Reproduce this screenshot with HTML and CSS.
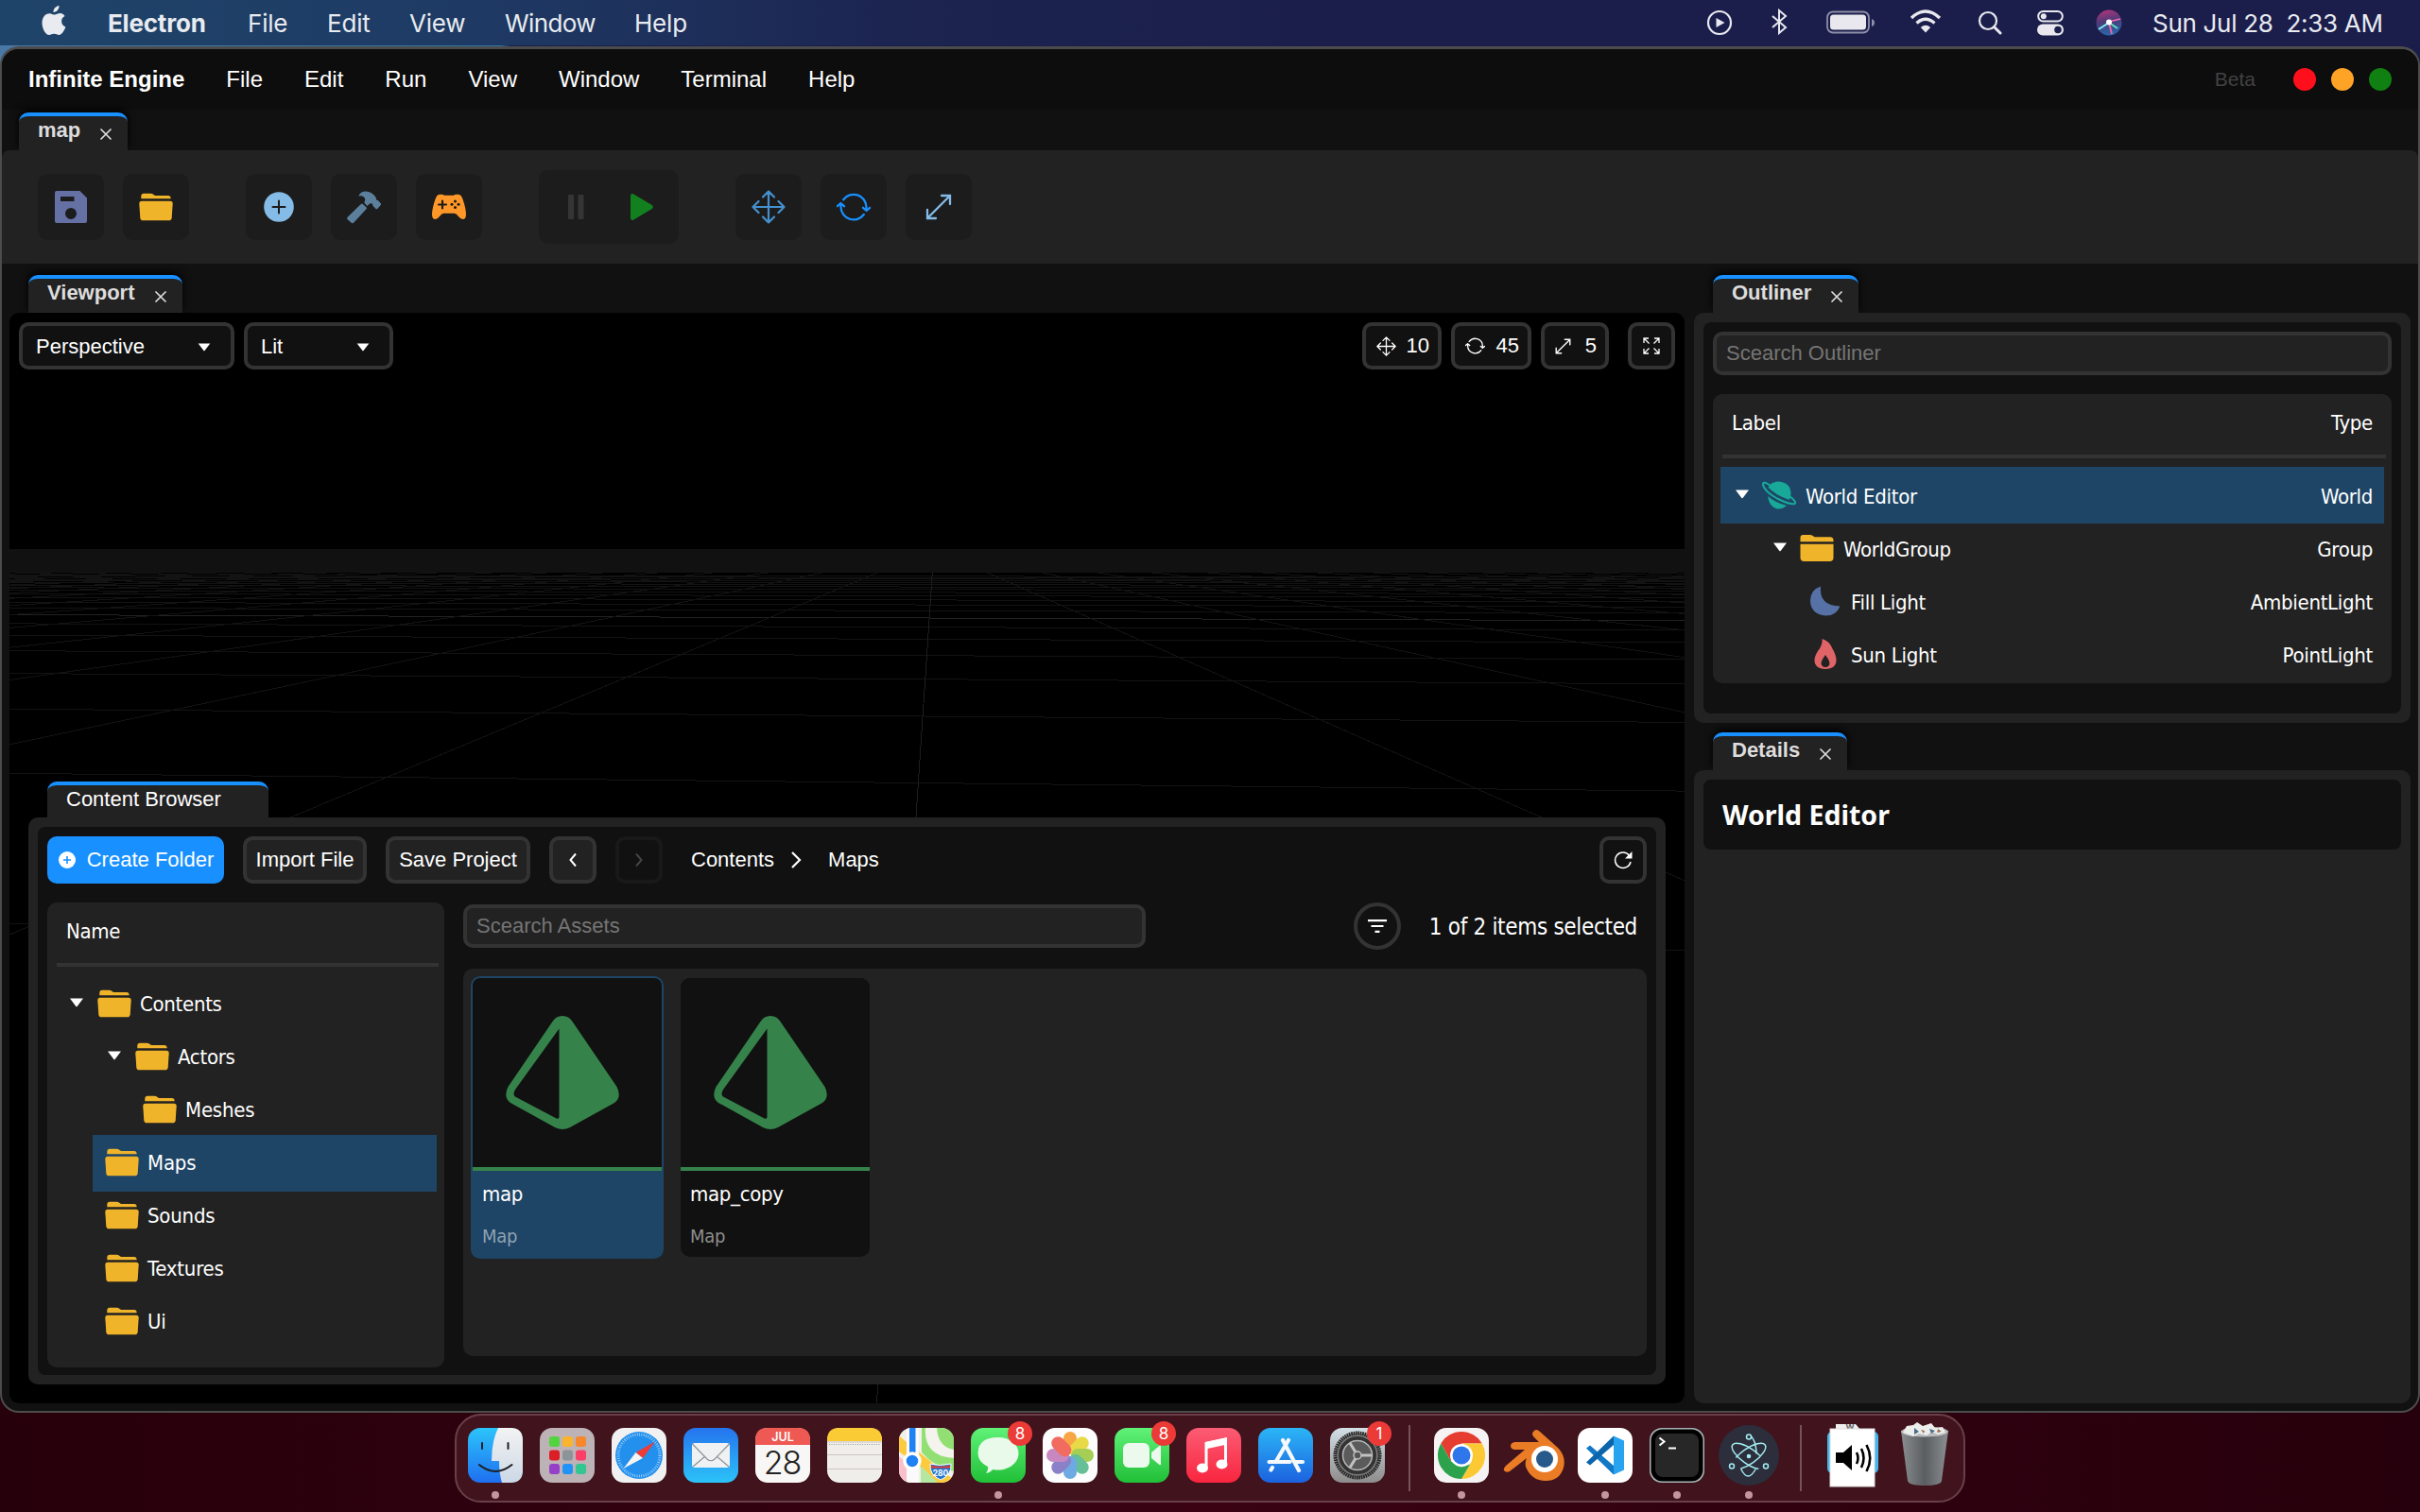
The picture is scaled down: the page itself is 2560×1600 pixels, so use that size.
FILE: index.html
```html
<!DOCTYPE html>
<html lang="en">
<head>
<meta charset="utf-8">
<title>Infinite Engine</title>
<link rel="stylesheet" href="styles.css">
</head>
<body>
<svg class="sprite" aria-hidden="true">
  <symbol id="i-close" viewBox="0 0 12 12"><path d="M1 1l10 10M11 1L1 11" fill="none" stroke="currentColor" stroke-width="1.700" stroke-linecap="round"/></symbol>
  <symbol id="i-caret" viewBox="0 0 16 10"><path d="M1 0.500h14L8.600 9a.8.8 0 0 1-1.200 0z" fill="currentColor"/></symbol>
  <symbol id="i-open" viewBox="0 0 36 30"><path d="M2.300 6.200V3.400Q2.500.8 5 .8h7.400q1.400 0 2.500.8l1.300.8q1 .6 2.300.6H31q2.500 0 2.700 3.200z" fill="#f0b42b"/><path d="M3 8.800h30q2.800 0 2.700 2.600l-1 15q-.3 2.800-2.800 2.800H4.100q-2.500 0-2.800-2.800l-1-15Q.2 8.800 3 8.800z" fill="#f0b42b"/></symbol>
  <symbol id="i-folder" viewBox="0 0 36 30"><path d="M.5 8.200V4Q.5 1 3.500 1h7.500q1.300 0 2.300.7l1.500 1q.9.600 2 .600H32q3.500 0 3.500 3.500v1.400z" fill="#f0b42b"/><path d="M.5 10.800h35V25q0 4-4 4h-27q-4 0-4-4z" fill="#f0b42b"/></symbol>
  <symbol id="i-move" viewBox="0 0 36 36"><path d="M18 1.500v33M1.500 18h33M12 7.500l6-6 6 6M12 28.500l6 6 6-6M7.500 12l-6 6 6 6M28.500 12l6 6-6 6" fill="none" stroke="currentColor" stroke-width="2.200" stroke-linecap="round" stroke-linejoin="round"/></symbol>
  <symbol id="i-rotate" viewBox="0 0 36 30"><path d="M7.200 7.200A13.500 13.500 0 0 1 31.500 15v3M28.800 23A13.500 13.500 0 0 1 4.500 15v-3M28 15.800l3.600 3.200 3.600-3.200M.8 14.200L4.400 11 8 14.200" fill="none" stroke="currentColor" stroke-width="2.300" stroke-linecap="round" stroke-linejoin="round"/></symbol>
  <symbol id="i-scale" viewBox="0 0 28 28"><path d="M2 26L26 2M17 2h9v9M2 17v9h9" fill="none" stroke="currentColor" stroke-width="2.300" stroke-linecap="round"/></symbol>
  <symbol id="i-prism" viewBox="0 0 120 120"><path fill-rule="evenodd" d="M49.500 6Q53 0 60 0t10.500 6L117.500 75q5.500 11-2.500 17L68 118q-8 4-16 0L5 92q-8-6-2.500-17zM56.500 13.500L10 78q-3 5 0 7.500l43.500 23q3 1 3-1.500z" fill="#35834a"/></symbol>
</svg>

<header class="menubar">
  <svg class="apple" viewBox="0 0 28 34"><path fill="#e8ebf0" d="M19.500 1c.3 3.500-2.600 7-6 6.900C13.200 4.500 16.300 1.300 19.500 1zM25.600 12c-2.300 1.400-3.500 3-3.500 5.500 0 2.900 1.700 4.900 4.300 6-1.300 3.700-3.900 8.300-6.900 8.500-2 .1-2.700-1.200-5.200-1.200S11 31.900 9.100 32C5.300 32.100 1.500 25.200 1.500 19.200 1.500 13.300 5 9.200 9.300 9.200c2.200 0 3.700 1.400 5.500 1.400 1.700 0 3.300-1.500 6-1.500 1.700 0 3.600 1 4.800 2.900z"/></svg>
  <span class="m-app">Electron</span><span class="m-file">File</span><span class="m-edit">Edit</span><span class="m-view">View</span><span class="m-window">Window</span><span class="m-help">Help</span>
  <div class="status">
    <svg width="28" height="28" viewBox="0 0 28 28"><circle cx="14" cy="14" r="12" fill="none" stroke="#e8e8ee" stroke-width="2.200"/><path d="M10.500 9v10l9-5z" fill="#e8e8ee"/></svg>
    <svg class="bt" width="20" height="28" viewBox="0 0 20 28"><path d="M2 8l14 12-7 6V2l7 6L2 20" fill="none" stroke="#e8e8ee" stroke-width="2"/></svg>
    <svg class="batt" width="52" height="26" viewBox="0 0 52 26"><rect x="1" y="1.500" width="44" height="22" rx="6" fill="none" stroke="#8d8ea8" stroke-width="1.800"/><rect x="4" y="4.500" width="38" height="16" rx="3.500" fill="#e8e8ee"/><path d="M48 9q3 1 3 4t-3 4z" fill="#8d8ea8"/></svg>
    <svg class="wifi" width="34" height="26" viewBox="0 0 34 26"><path d="M2 9Q17-5 32 9M7.500 14.500q9.500-8.500 19 0" fill="none" stroke="#e8e8ee" stroke-width="3.400"/><path d="M11.800 19q5.200-4.500 10.400 0L17 24.500z" fill="#e8e8ee"/></svg>
    <svg class="srch" width="26" height="26" viewBox="0 0 26 26"><circle cx="11" cy="11" r="9" fill="none" stroke="#e8e8ee" stroke-width="2.200"/><path d="M17.500 17.500l6.500 6.500" stroke="#e8e8ee" stroke-width="3" stroke-linecap="round"/></svg>
    <svg class="cc" width="28" height="28" viewBox="0 0 28 28"><rect x="1.200" y="2" width="25.600" height="10.500" rx="5.200" fill="none" stroke="#e8e8ee" stroke-width="2"/><circle cx="6.800" cy="7.200" r="3" fill="#e8e8ee"/><rect y="15.500" width="28" height="12" rx="6" fill="#e8e8ee"/><circle cx="22" cy="21.500" r="3.800" fill="#1c1f4c"/></svg>
    <svg class="siri" width="28" height="28" viewBox="0 0 28 28"><defs><linearGradient id="siri" x1=".3" y1="0" x2=".5" y2="1"><stop offset="0" stop-color="#b0347c"/><stop offset=".45" stop-color="#4d3a77"/><stop offset="1" stop-color="#2869ad"/></linearGradient></defs><circle cx="14" cy="14" r="13.500" fill="url(#siri)"/><path d="M14 14L3 21" stroke="#7ff0ef" stroke-width="2"/><path d="M14 13l12-3" stroke="#f46db0" stroke-width="1.500"/><path d="M14 14l9 6" stroke="#5fe3c0" stroke-width="2"/><path d="M14 14l3 12" stroke="#e865a7" stroke-width="2"/><circle cx="14" cy="13.500" r="3" fill="#fff"/></svg>
    <span class="clock">Sun Jul 28&nbsp; 2:33 AM</span>
  </div>
</header>

<main class="window">
  <nav class="appbar">
    <b>Infinite Engine</b><span>File</span><span>Edit</span><span>Run</span><span>View</span><span>Window</span><span>Terminal</span><span>Help</span>
    <div class="lights"><em>Beta</em><i class="red"></i><i class="amber"></i><i class="green"></i></div>
  </nav>

  <div class="tabs tabs-doc"><div class="tab">map<svg><use href="#i-close"/></svg></div></div>

  <div class="toolbar">
    <div class="set">
      <div class="tool"><svg width="34" height="34" viewBox="0 0 34 34"><path fill-rule="evenodd" fill="#6570a4" d="M2 0h24.500L34 7.500V32q0 2-2 2H2q-2 0-2-2V2Q0 0 2 0zM6 6v5h14.500V6zM17 18a6 6 0 1 0 0 12 6 6 0 0 0 0-12z"/></svg></div>
      <div class="tool"><svg width="36" height="30"><use href="#i-open"/></svg></div>
    </div>
    <div class="set">
      <div class="tool"><svg width="32" height="32" viewBox="0 0 32 32"><circle cx="16" cy="16" r="15.800" fill="#85bce7"/><path d="M16 9.500v13M9.500 16h13" stroke="#1c1c1c" stroke-width="2" stroke-linecap="round"/></svg></div>
      <div class="tool"><svg width="36" height="35" viewBox="0 0 36 35"><path fill="#5c809c" d="M.7 27.700L14.800 14q1-.9 2 0l3.600 3.300q1 1 0 2L7.300 33.600q-1.300 1.300-2.600.1L.7 30.300q-1.200-1.300 0-2.600zM12.500 5.500Q14 .5 20 .5q6 .2 10 5.500 1.300 1.800 1 3.500l1.800.4 3 3.300q.7.900-.1 1.700l-3.500 4q-.8.800-1.700 0l-3.300-3.500-.2-2q-2.600-.8-4 1.200l-1.500 1.300-3.300-3.300q2.400-4.400-.7-6.400-2-1.600-5-.7z"/></svg></div>
      <div class="tool"><svg width="36" height="28" viewBox="0 0 36 28"><path fill="#ff9828" d="M8 .8Q12 .3 13 1.700h10Q24 .3 28 .8q3 .2 4.500 5Q36 16 36 22q0 5-3.500 5-2.300 0-4.500-3-2.500-3.300-4.500-3.300h-11Q10.500 20.700 8 24q-2.200 3-4.500 3Q0 27 0 22 0 16 3.500 5.800 5 1 8 .8z"/><path d="M11 7.500v8M7 11.500h8" stroke="#1c1c1c" stroke-width="2.200" stroke-linecap="round"/><g fill="#1c1c1c"><circle cx="24.500" cy="8" r="1.500"/><circle cx="24.500" cy="14.500" r="1.500"/><circle cx="21" cy="11.300" r="1.500"/><circle cx="28" cy="11.300" r="1.500"/></g></svg></div>
    </div>
    <div class="playset">
      <svg width="18" height="26" viewBox="0 0 18 26"><rect x="0" width="6" height="26" rx="1" fill="#353535"/><rect x="10.500" width="6" height="26" rx="1" fill="#353535"/></svg>
      <svg width="24" height="28" viewBox="0 0 24 28"><path d="M0 2Q.3-.5 3 .3L23 12.300q1.600 1.700 0 3.400L3 27.700Q.3 28.500 0 26z" fill="#138020"/></svg>
    </div>
    <div class="set">
      <div class="tool c-move"><svg width="36" height="36"><use href="#i-move"/></svg></div>
      <div class="tool c-rot"><svg width="36" height="30"><use href="#i-rotate"/></svg></div>
      <div class="tool c-scale"><svg width="28" height="28"><use href="#i-scale"/></svg></div>
    </div>
  </div>

  <div class="workspace">
    <section class="left">
      <div class="tabs tabs-view"><div class="tab">Viewport<svg><use href="#i-close"/></svg></div></div>
      <div class="viewport">
        <svg class="grid" id="grid" viewBox="10 331 1772 1154" shape-rendering="crispEdges"></svg>
        <div class="vbar">
          <div class="box sel-p">Perspective<svg width="16" height="9"><use href="#i-caret"/></svg></div>
          <div class="box sel-l">Lit<svg width="16" height="9"><use href="#i-caret"/></svg></div>
          <div class="box snap s1"><svg width="21" height="21"><use href="#i-move"/></svg>10</div>
          <div class="box snap s2"><svg width="21" height="18"><use href="#i-rotate"/></svg>45</div>
          <div class="box snap s3"><svg width="17" height="17"><use href="#i-scale"/></svg>5</div>
          <div class="box full"><svg width="18" height="18" viewBox="0 0 18 18"><path d="M1 6V1h5M1 1l5.500 5.500M12 1h5v5M17 1l-5.500 5.500M1 12v5h5M1 17l5.500-5.500M12 17h5v-5M17 17l-5.500-5.500" fill="none" stroke="#fff" stroke-width="1.300"/></svg></div>
        </div>

        <div class="drawer">
          <div class="dtab">Content Browser</div>
          <div class="frame browser">
            <div class="pane bpane">
              <div class="actions">
                <div class="btn primary"><svg width="20" height="20" viewBox="0 0 20 20"><circle cx="10" cy="10" r="9" fill="#fff"/><path d="M10 6v8M6 10h8" stroke="#1890ff" stroke-width="1.600"/></svg>Create Folder</div>
                <div class="btn imp">Import File</div>
                <div class="btn sav">Save Project</div>
                <div class="btn sq"><svg width="10" height="16" viewBox="0 0 10 16"><path d="M8 1.500L2.500 8 8 14.500" fill="none" stroke="#fff" stroke-width="2"/></svg></div>
                <div class="btn sq off"><svg width="10" height="16" viewBox="0 0 10 16"><path d="M2 1.500L7.500 8 2 14.500" fill="none" stroke="#444" stroke-width="2"/></svg></div>
                <div class="crumbs"><span>Contents</span><svg width="12" height="20" viewBox="0 0 12 20"><path d="M2 2l8 8-8 8" fill="none" stroke="#fff" stroke-width="2.200"/></svg><span>Maps</span></div>
                <div class="btn sq ref"><svg width="20" height="20" viewBox="0 0 20 20"><path d="M16.500 5.200A8.300 8.300 0 1 0 18 12" fill="none" stroke="#fff" stroke-width="1.500"/><path d="M19.500 1v7.500H12z" fill="#fff"/></svg></div>
              </div>
              <div class="cols">
                <div class="card tree">
                  <div class="thead"><span>Name</span></div>
                  <div class="row d0"><svg class="caret"><use href="#i-caret"/></svg><svg class="fo"><use href="#i-open"/></svg>Contents</div>
                  <div class="row d1"><svg class="caret"><use href="#i-caret"/></svg><svg class="fo"><use href="#i-open"/></svg>Actors</div>
                  <div class="row d2"><svg class="fo"><use href="#i-open"/></svg>Meshes</div>
                  <div class="row d3 on"><svg class="fo"><use href="#i-open"/></svg>Maps</div>
                  <div class="row d3"><svg class="fo"><use href="#i-open"/></svg>Sounds</div>
                  <div class="row d3"><svg class="fo"><use href="#i-open"/></svg>Textures</div>
                  <div class="row d3"><svg class="fo"><use href="#i-open"/></svg>Ui</div>
                </div>
                <div class="assets">
                  <div class="abar">
                    <div class="input">Scearch Assets</div>
                    <div class="filter"><svg width="22" height="14" viewBox="0 0 22 14"><path d="M1 1.200h20M4.500 7h13M8.500 12.800h5" stroke="#fff" stroke-width="2.200"/></svg></div>
                    <div class="count">1 of 2 items selected</div>
                  </div>
                  <div class="card files">
                    <div class="file on"><div class="thumb"><svg><use href="#i-prism"/></svg></div><p>map</p><small>Map</small></div>
                    <div class="file"><div class="thumb"><svg><use href="#i-prism"/></svg></div><p>map_copy</p><small>Map</small></div>
                  </div>
                </div>
              </div>
            </div>
          </div>
        </div>
      </div>
    </section>

    <aside class="right">
      <div class="tabs tabs-side"><div class="tab">Outliner<svg><use href="#i-close"/></svg></div></div>
      <div class="frame outliner">
        <div class="pane">
          <div class="input">Scearch Outliner</div>
          <div class="card list">
            <div class="thead"><span>Label</span><span>Type</span></div>
            <div class="row on o0"><svg class="caret"><use href="#i-caret"/></svg><svg width="36" height="32" viewBox="0 0 36 32"><path d="M5.500 12Q6 1 17.500.5 30 1.500 30.500 13q.2 4-1.700 7Q13 14.500 6.500 6.500q-1 2.500-1 5.500z" fill="#18a999"/><path d="M9 5Q1.500-.5 1 3q0 7 15 15.500 14 7 18.500 5.500Q37 22 29 16" fill="none" stroke="#18a999" stroke-width="2"/><path d="M6 16q8 7 20 10-4.500 4-10 3.500Q7.500 27.500 6 16z" fill="#18a999"/></svg><span>World Editor</span><span class="ty">World</span></div>
            <div class="row o1"><svg class="caret"><use href="#i-caret"/></svg><svg class="fo"><use href="#i-folder"/></svg><span>WorldGroup</span><span class="ty">Group</span></div>
            <div class="row o2"><svg width="34" height="34" viewBox="0 0 34 34"><path d="M12 1.500Q10 22 32.500 22.500 28.500 32.500 17.500 32.500 1 31 1 16 1.500 5 12 1.500z" fill="#5571a6"/></svg><span>Fill Light</span><span class="ty">AmbientLight</span></div>
            <div class="row o2"><svg width="34" height="34" viewBox="0 0 34 34"><path fill-rule="evenodd" d="M13.500 1Q21 3 24.500 11.500q4 7 4 12 0 9-11.500 9.500-11.500-.5-11.500-9.500 0-4 3.500-9.500Q14.500 7 13.500 1zM17 18q-4.500 6-4.500 9 .5 4 4.500 4t4.500-4q0-3-4.500-9z" fill="#e06467"/></svg><span>Sun Light</span><span class="ty">PointLight</span></div>
          </div>
        </div>
      </div>
      <div class="tabs tabs-side t2"><div class="tab">Details<svg><use href="#i-close"/></svg></div></div>
      <div class="frame details"><div class="pane title">World Editor</div></div>
    </aside>
  </div>
</main>

<footer class="dock">
  <div class="app run"><svg viewBox="0 0 58 58"><defs><linearGradient id="g1" x1="0" y1="0" x2="0" y2="1"><stop offset="0" stop-color="#2cc4fb"/><stop offset="1" stop-color="#1f6ff0"/></linearGradient><linearGradient id="g2" x1="0" y1="0" x2="0" y2="1"><stop offset="0" stop-color="#f3f3f3"/><stop offset="1" stop-color="#ccd8e6"/></linearGradient></defs><rect width="58" height="58" rx="13" fill="url(#g1)"/><path d="M32 0h13q13 0 13 13v32q0 13-13 13h-9q-3-10-3-23h-8Q25 14 32 0z" fill="url(#g2)"/><path d="M15 16v6M42.500 16v6M12 39q17 14 34.500 0" fill="none" stroke="#1d2126" stroke-width="2" stroke-linecap="round"/></svg></div>
  <div class="app"><svg viewBox="0 0 58 58"><rect width="58" height="58" rx="13" fill="#bdb2b6"/><rect x="10" y="9" width="11" height="11" rx="3" fill="#52d43f"/><rect x="24" y="9" width="11" height="11" rx="3" fill="#fbb42b"/><rect x="38" y="9" width="11" height="11" rx="3" fill="#f7872b"/><rect x="10" y="23.500" width="11" height="11" rx="3" fill="#dc1e26"/><rect x="24" y="23.500" width="11" height="11" rx="3" fill="#8d9499"/><rect x="38" y="23.500" width="11" height="11" rx="3" fill="#fb3f66"/><rect x="10" y="38" width="11" height="11" rx="3" fill="#9540c9"/><rect x="24" y="38" width="11" height="11" rx="3" fill="#1f93f6"/><rect x="38" y="38" width="11" height="11" rx="3" fill="#33c690"/></svg></div>
  <div class="app"><svg viewBox="0 0 58 58"><rect width="58" height="58" rx="13" fill="#f1f1f1"/><circle cx="29" cy="29" r="25" fill="#2390ee"/><circle cx="29" cy="29" r="22" fill="none" stroke="#aed8fb" stroke-width="3" stroke-dasharray=".8 1.600"/><path d="M46 14.500L33 32l-7.500-6z" fill="#ef3b35"/><path d="M12.500 43L25.500 26l7.500 6z" fill="#f4f4f4"/></svg></div>
  <div class="app"><svg viewBox="0 0 58 58"><defs><linearGradient id="g3" x1="0" y1="0" x2="0" y2="1"><stop offset="0" stop-color="#2574ee"/><stop offset="1" stop-color="#2cc3f8"/></linearGradient></defs><rect width="58" height="58" rx="13" fill="url(#g3)"/><rect x="9" y="16" width="40" height="26" rx="3" fill="#f0f1f2"/><path d="M9.500 17l15.500 16q4 3.500 8 0L48.500 17M10 41l13-11M48 41L35 30" fill="none" stroke="#8c9499" stroke-width="1.200"/></svg></div>
  <div class="app"><svg viewBox="0 0 58 58"><rect width="58" height="58" rx="13" fill="#f8f7f6"/><path d="M0 18v-5Q0 0 13 0h32q13 0 13 13v5z" fill="#ee5a53"/><text x="29" y="14" class="jul">JUL</text><text x="28.500" y="48.500" class="day">28</text></svg></div>
  <div class="app"><svg viewBox="0 0 58 58"><rect width="58" height="58" rx="13" fill="#f0eeeb"/><path d="M0 14v-1Q0 0 13 0h32q13 0 13 13v1z" fill="#fbcb35"/><path d="M0 15h58M0 28.500h58M0 43.500h58" stroke="#c9c6c2"/><path d="M2 17.500h54" stroke="#9d9a98" stroke-dasharray="1 1.500"/></svg></div>
  <div class="app"><svg viewBox="0 0 58 58"><defs><clipPath id="c1"><rect width="58" height="58" rx="13"/></clipPath></defs><g clip-path="url(#c1)"><rect width="58" height="58" fill="#f2f0ea"/><path d="M24 0h34v46q-20-4-34-20z" fill="#92e073"/><path d="M28 0q-2 30 30 32V23Q41 20 40 0z" fill="#f4f3ee"/><path d="M0 8l9 8v16L0 25zM19 24l39 31v3H40L19 38z" fill="#fcca3f"/><path d="M0 30l14 12v16H0z" fill="#f9bfcb"/><path d="M8 0h13v58H8z" fill="#fafafa"/><path d="M11 0h6.500v32H11z" fill="#1e82f5"/><path d="M23 40l18 18H23z" fill="#b6e7a1"/></g><circle cx="14" cy="35" r="8" fill="#1e82f5" stroke="#fff" stroke-width="3.500"/><path d="M33 38q10 3 22 0 1 12-11 17-12-5-11-17z" fill="#2376cc" stroke="#fff"/><path d="M34 39.500q10 2.500 20 0v3H34z" fill="#d93b3b"/><text x="44" y="51" class="route">280</text></svg></div>
  <div class="app run"><svg viewBox="0 0 58 58"><defs><linearGradient id="g4" x1="0" y1="0" x2="0" y2="1"><stop offset="0" stop-color="#5ff277"/><stop offset="1" stop-color="#21bf38"/></linearGradient></defs><rect width="58" height="58" rx="13" fill="url(#g4)"/><path d="M29 10c12 0 21.500 7.500 21.500 17S41 44.500 29 44.500q-3 0-5.500-.6-3 3.200-7.500 4 2.500-3 2.200-6.600Q7.500 36 7.500 27 7.500 10 29 10z" fill="#e9f9ea"/></svg><b class="badge">8</b></div>
  <div class="app"><svg viewBox="0 0 58 58"><rect width="58" height="58" rx="13" fill="#fdfdfd"/><g opacity=".88"><rect x="22" y="4" width="14" height="24" rx="7" fill="#f89b2c"/><rect x="22" y="4" width="14" height="24" rx="7" fill="#e6d62f" transform="rotate(45 29 29)"/><rect x="22" y="4" width="14" height="24" rx="7" fill="#9bc83d" transform="rotate(90 29 29)"/><rect x="22" y="4" width="14" height="24" rx="7" fill="#52b788" transform="rotate(135 29 29)"/><rect x="22" y="4" width="14" height="24" rx="7" fill="#5a9fe0" transform="rotate(180 29 29)"/><rect x="22" y="4" width="14" height="24" rx="7" fill="#7c71c2" transform="rotate(225 29 29)"/><rect x="22" y="4" width="14" height="24" rx="7" fill="#c079b8" transform="rotate(270 29 29)"/><rect x="22" y="4" width="14" height="24" rx="7" fill="#f0584b" transform="rotate(315 29 29)"/></g></svg></div>
  <div class="app"><svg viewBox="0 0 58 58"><rect width="58" height="58" rx="13" fill="url(#g4)"/><rect x="9" y="16" width="28" height="26" rx="6" fill="#ecf9ed"/><path d="M39 26l8.500-7q1.500-1 1.500 1v18q0 2-1.500 1L39 32z" fill="#ecf9ed"/></svg><b class="badge">8</b></div>
  <div class="app"><svg viewBox="0 0 58 58"><defs><linearGradient id="g5" x1="0" y1="0" x2="0" y2="1"><stop offset="0" stop-color="#fb5c74"/><stop offset="1" stop-color="#f9253f"/></linearGradient></defs><rect width="58" height="58" rx="13" fill="url(#g5)"/><path d="M21 41V16.500L41.500 12v25" fill="none" stroke="#fff" stroke-width="3"/><path d="M20 15l23-5v7.500l-23 5z" fill="#fff"/><ellipse cx="17" cy="42.500" rx="6" ry="5" fill="#fff"/><ellipse cx="37.500" cy="38.500" rx="6" ry="5" fill="#fff"/></svg></div>
  <div class="app"><svg viewBox="0 0 58 58"><defs><linearGradient id="g6" x1="0" y1="0" x2="0" y2="1"><stop offset="0" stop-color="#2bb5f6"/><stop offset="1" stop-color="#1c62df"/></linearGradient></defs><rect width="58" height="58" rx="13" fill="url(#g6)"/><path d="M26 13l17 32M32 13L18.500 36M11.500 36h22M40 36h7M15 42l-1.500 2.500" fill="none" stroke="#f5f8fc" stroke-width="4.200" stroke-linecap="round"/></svg></div>
  <div class="app"><svg viewBox="0 0 58 58"><defs><linearGradient id="g7" x1="0" y1="0" x2="0" y2="1"><stop offset="0" stop-color="#d3dfe6"/><stop offset="1" stop-color="#8e8c8c"/></linearGradient></defs><rect width="58" height="58" rx="13" fill="url(#g7)"/><circle cx="29" cy="29" r="23.500" fill="#7d7d7d" stroke="#272727" stroke-width="4" stroke-dasharray="1.700 .7"/><circle cx="29" cy="29" r="18" fill="#6d6d6d" stroke="#333" stroke-width="4"/><circle cx="29" cy="29" r="15.500" fill="#5b5b5b" stroke="#b7b7b7" stroke-width="1.500"/><path d="M29 29h15M29 29l-8-13M29 29l-8 13" stroke="#c2c2c2" stroke-width="3"/><circle cx="29" cy="29" r="4" fill="#555" stroke="#c2c2c2" stroke-width="1.500"/></svg><b class="badge">1</b></div>
  <hr>
  <div class="app run"><svg viewBox="0 0 58 58"><rect width="58" height="58" rx="13" fill="#f5f3f3"/><path d="M29 4a25 25 0 0 1 21.700 12.500H29L18 35.500 7.300 16.500A25 25 0 0 1 29 4z" fill="#e53e31"/><path d="M50.700 16.500A25 25 0 0 1 29 54l11-19-1-12-10-6.500z" fill="#fcc934"/><path d="M29 54A25 25 0 0 1 7.300 16.500L18 35.500l11 6 9-3z" fill="#2da24c"/><circle cx="29" cy="29" r="12" fill="#fff"/><circle cx="29" cy="29" r="9.500" fill="#2f76ea"/></svg></div>
  <div class="app"><svg viewBox="0 0 58 58" overflow="visible"><path d="M29 4q3-4 7 0l19 17q9 9 6 21-4 14-19 14T21 41q-1-5 1-9L4 46q-4 2-6-1-1-2 2-5l20-17H9q-4-1-4-4t4-4h26L29 9q-2-3 0-5z" fill="#ea7c26"/><circle cx="41" cy="33" r="14" fill="#fff"/><circle cx="41" cy="33" r="9" fill="#275a8a"/></svg></div>
  <div class="app run"><svg viewBox="0 0 58 58"><rect width="58" height="58" rx="13" fill="#fff"/><path d="M9 21.500l4-3L38 40v9.500z" fill="#1278c5"/><path d="M9 36.500l4 3L38 18V8.500z" fill="#0c65ab"/><path d="M38 8.500l11 5v31l-11 5z" fill="#28a3f0"/></svg></div>
  <div class="app run"><svg viewBox="0 0 58 58"><rect width="58" height="58" rx="13" fill="#a9b4b6"/><rect x="1.500" y="1.500" width="55" height="55" rx="12" fill="#000"/><rect x="6" y="6" width="46" height="46" rx="8" fill="#272727"/><path d="M10.500 10.500l5 4-5 4M20 21.500h8" fill="none" stroke="#fff" stroke-width="2"/></svg></div>
  <div class="app run"><svg viewBox="0 0 58 58" overflow="visible"><circle cx="29" cy="29" r="32" fill="#2c2e3b"/><g fill="none" stroke="#a2ebf2" stroke-width="1.500" stroke-linecap="round"><ellipse cx="29" cy="30" rx="21" ry="8" transform="rotate(35 29 30)" stroke-dasharray="72 22" stroke-dashoffset="-8"/><ellipse cx="29" cy="30" rx="21" ry="8" transform="rotate(-35 29 30)" stroke-dasharray="72 22" stroke-dashoffset="-60"/><path d="M31.500 9q5 5 5.500 18M21 44q7 14 15 0"/></g><g fill="#2c2e3b" stroke="#a2ebf2" stroke-width="1.500"><circle cx="29" cy="9.500" r="2.500"/><circle cx="11" cy="40.500" r="2.500"/><circle cx="47" cy="40.500" r="2.500"/></g><circle cx="29" cy="30" r="2.300" fill="#a2ebf2"/></svg></div>
  <hr>
  <div class="app"><svg viewBox="0 0 58 58" overflow="visible"><rect x="2" y="4" width="54" height="44" rx="5" fill="#45b5e8"/><path d="M11-4h21l5 6v10H11z" fill="#eee"/><text x="26" y="2" class="w">W</text><rect x="5" y="1" width="47" height="61" fill="#fff" stroke="#ddd" stroke-width="1"/><path d="M11 26h8l9-8v27l-9-8h-8z" fill="#000"/><path d="M33 26q3 6 0 12M38 22q5 10 0 20M43.500 18q7.500 14 0 28" fill="none" stroke="#000" stroke-width="2.600"/></svg></div>
  <div class="app"><svg viewBox="0 0 58 58" overflow="visible"><defs><linearGradient id="g8"><stop offset="0" stop-color="#8b8e91"/><stop offset=".5" stop-color="#5b5e61"/><stop offset="1" stop-color="#8c8f92"/></linearGradient></defs><path d="M4 3L11 56q1 5 18 5t18-5L54 3z" fill="url(#g8)"/><ellipse cx="29" cy="4" rx="25" ry="5.500" fill="#b9bbbd"/><path d="M6 5l4-7 7-1 4-3 6 4 9-3 4 5 8-1 3 6-8 2-6-3-6 4-8-2-6 3z" fill="#eceeec"/><path d="M18 0l5 4-5 3zM34 1l6 2-4 3z" fill="#4b6c88"/><path d="M25 2l4 1-1 3zM43 1l4 3-5 1z" fill="#a06d50"/></svg></div>
</footer>
<script src="grid.js"></script>
</body>
</html>
```
FILE: styles.css
```css
* { box-sizing: border-box; }
body {
  margin: 0; width: 2560px; height: 1600px; overflow: hidden;
  display: flex; flex-direction: column;
  font-family: "Liberation Sans", Arial, sans-serif; font-size: 22px; color: #fff;
  background: linear-gradient(90deg, #4a78a6 0, #2b75a0 530px, #1a1d4a 540px) 0 0 / 100% 120px no-repeat,
    linear-gradient(90deg, #26000b, #3a0213 50%, #26000c);
}
svg { flex: none; display: block; }
.sprite { position: absolute; width: 0; height: 0; }

.menubar {
  height: 48px; flex: none; display: flex; align-items: center; padding-left: 43px;
  background: linear-gradient(90deg, #1f4469, #1e3a64 500px, #1c2450 950px, #1b1e4b 1400px);
  font-family: Inter, sans-serif; font-size: 26px; letter-spacing: -.2px; color: #e8ebf0; line-height: 47px;
}
.menubar span { flex: none; white-space: nowrap; }
.apple { width: 28px; height: 34px; margin-right: 43px; margin-top: -4px; }
.m-app { width: 148px; font-weight: 700; letter-spacing: -.2px; }
.m-file { width: 84px; } .m-edit { width: 87px; } .m-view { width: 101px; } .m-window { width: 137px; letter-spacing: -.6px; }
.status { flex: 1; display: flex; align-items: center; justify-content: flex-end; padding-right: 38px; }
.bt { margin-left: 40px; margin-top: -3px; } .batt { margin-left: 39px; }
.wifi { margin-left: 36px; margin-top: -2px; } .srch { margin-left: 38px; } .cc { margin-left: 37px; } .siri { margin-left: 34px; }
.clock { margin-left: 32px; width: 245px; letter-spacing: -.3px; }

.window {
  flex: none; margin-top: 1px; height: 1446px; display: flex; flex-direction: column;
  background: #111; border: 2px solid #4c4c4d; border-radius: 20px; overflow: hidden;
  border-top-width: 3px;
}
.appbar { flex: none; height: 64px; background: #0d0d0d; display: flex; align-items: center; gap: 44px; padding-left: 28px; font-size: 24px; }
.lights { margin-left: auto; display: flex; align-items: center; gap: 16px; padding-right: 28px; }
.lights em { font-style: normal; font-size: 21px; color: #424242; margin-right: 24px; }
.lights i { width: 24px; height: 24px; border-radius: 50%; }
.red { background: #ff0f1b; } .amber { background: #ffa327; } .green { background: #0f8011; }

.tabs { flex: none; display: flex; }
.tab {
  height: 40px; display: flex; padding: 0 17px 0 20px; gap: 21px; line-height: 29px;
  border-top: 4px solid #1890ff; border-radius: 10px 10px 0 0; background: #222; color: #ddd; font-weight: 700;
  box-shadow: 0 -3px 8px #000;
}
.tab svg { width: 12px; height: 12px; margin-top: 13px; }
.tabs-doc { padding: 3px 0 0 18px; }
.toolbar { flex: none; height: 120px; background: #222; border-radius: 8px 8px 0 0; display: flex; align-items: center; gap: 60px; padding-left: 38px; }
.set { display: flex; gap: 20px; }
.tool { width: 70px; height: 70px; border-radius: 10px; background: #1c1c1c; display: grid; place-items: center; }
.playset { width: 148px; height: 78px; border-radius: 10px; background: #1c1c1c; display: flex; align-items: center; padding-left: 31px; gap: 48px; }
.c-move { color: #4591cf; } .c-rot { color: #1890ff; } .c-scale { color: #85bce7; }

.workspace { flex: 1; display: flex; padding: 0 8px; gap: 10px; }
.left { width: 1772px; display: flex; flex-direction: column; }
.right { width: 758px; display: flex; flex-direction: column; }
.tabs-view { padding: 12px 0 0 20px; }
.tabs-side { padding: 12px 0 0 20px; }
.t2 { padding-top: 10px; }
.viewport { position: relative; height: 1154px; background: #000; border-radius: 10px; overflow: hidden; display: flex; flex-direction: column; }
.grid { position: absolute; inset: 0; width: 1772px; height: 1154px; }
.vbar { position: relative; display: flex; padding: 10px 10px 0; }
.box { height: 50px; border: 4px solid #333; border-radius: 10px; background: #111; display: flex; align-items: center; justify-content: space-between; line-height: 26px; }
.sel-p { width: 228px; padding: 2px 20px 0 14px; }
.sel-l { width: 158px; padding: 2px 20px 0 14px; margin-left: 10px; }
.snap { padding: 0 9px 0 11px; color: #fff; }
.s1 { width: 84px; margin-left: auto; } .s2 { width: 85px; margin-left: 10px; } .s3 { width: 72px; margin-left: 10px; }
.full { width: 50px; margin-left: 20px; justify-content: center; }

.drawer { position: relative; margin: auto 20px 20px; }
.dtab { width: 234px; height: 38px; margin-left: 20px; padding-left: 20px; line-height: 30px; background: #222; border-top: 4px solid #1890ff; border-radius: 10px 10px 0 0; }
.frame { background: #222; border-radius: 10px; padding: 10px; }
.pane { background: #111; border-radius: 8px; padding: 10px; }
.browser { height: 600px; }
.bpane { height: 580px; }
.actions { display: flex; }
.btn { height: 50px; border: 4px solid #333; border-radius: 10px; background: #222; display: flex; align-items: center; justify-content: center; margin-right: 20px; white-space: nowrap; }
.primary { width: 187px; background: #1890ff; border-color: #1890ff; gap: 11px; }
.imp { width: 131px; } .sav { width: 153px; } .sq { width: 50px; }
.off { border-color: #191919; background: #111; }
.ref { margin: 0 0 0 auto; background: #111; }
.crumbs { display: flex; align-items: center; margin-left: 10px; }
.crumbs svg { margin: 0 28px 0 17px; }
.cols { display: flex; gap: 20px; margin-top: 20px; }
.card { background: #222; border-radius: 10px; }
.tree { width: 420px; height: 492px; font-family: "DejaVu Sans Condensed", "DejaVu Sans", sans-serif; font-stretch: condensed; letter-spacing: -.3px; }
.thead { display: flex; justify-content: space-between; height: 68px; border-bottom: 4px solid #333; margin: 0 6px 10px 10px; padding: 0 14px 0 10px; line-height: 61px; }
.tree .thead { margin-bottom: 12px; }
.row { height: 56px; display: flex; align-items: center; line-height: 56px; }
.row.on { background: #1e4566; height: 60px; margin: -2px 8px -2px 48px; }
.caret { width: 16px; height: 10px; margin: -4px 13px 0 0; }
.fo { width: 36px; height: 30px; margin: -2px 9px 0 0; }
.d0 { padding-left: 23px; } .d1 { padding-left: 63px; } .d2 { padding-left: 101px; } .d3 { padding-left: 61px; } .d3.on { padding-left: 13px; }
.d0 .fo, .d1 .fo { margin-left: 1px; }
.d2, .d3 { letter-spacing: -.2px; }
.input { height: 46px; border: 4px solid #333; border-radius: 10px; background: #222; color: #757575; padding-left: 10px; line-height: 37px; }
.assets { width: 1252px; }
.abar { display: flex; align-items: center; height: 50px; }
.abar .input { width: 722px; }
.filter { width: 50px; height: 50px; margin-left: 220px; border: 4px solid #333; border-radius: 50%; display: grid; place-items: center; }
.count { margin-left: auto; padding: 2px 10px 0 0; font: 24px "DejaVu Sans Condensed", "DejaVu Sans", sans-serif; font-stretch: condensed; letter-spacing: -.32px; white-space: nowrap; }
.files { height: 410px; margin-top: 20px; padding: 8px; display: flex; gap: 18px; align-items: flex-start; font-family: "DejaVu Sans Condensed", "DejaVu Sans", sans-serif; font-stretch: condensed; letter-spacing: -.3px; }
.file { width: 200px; height: 295px; margin-top: 2px; background: #111; border-radius: 10px; overflow: hidden; }
.file.on { width: 204px; height: 299px; margin-top: 0; border: 2px solid #1e4566; background: #1e4566; }
.thumb { height: 204px; background: #111; border-bottom: 4px solid #35834a; padding: 40px 0 0 35px; }
.thumb svg { width: 120px; height: 120px; }
.file p { margin: 0; padding-left: 10px; height: 48px; line-height: 49px; }
.file small { display: block; padding-left: 10px; font-size: 20px; line-height: 43px; color: #8e8e8e; }
.file.on small { color: #8ea2b2; }

.outliner { height: 434px; }
.outliner .pane { height: 414px; }
.list { margin-top: 20px; height: 306px; font-family: "DejaVu Sans Condensed", "DejaVu Sans", sans-serif; font-stretch: condensed; letter-spacing: -.3px; }
.list .row { line-height: 54px; }
.list .row.on { margin: -1px 8px -2px; }
.list .row span { padding-top: 3px; }
.o0 { padding-left: 15px; } .o0 svg:nth-child(2) { margin-left: 1px; margin-right: 10px; margin-top: 1px; }
.o0 .caret, .o1 .caret { margin-right: 12px; margin-top: -2px; }
.o1 { padding-left: 63px; } .o1 .fo { margin: -1px 10px 0 1px; }
.o2 { padding-left: 101px; } .o2 svg { margin-left: 1px; margin-right: 10px; }
.row .ty { margin-left: auto; margin-right: 20px; }
.on .ty { margin-right: 12px; }
.row.on .ty { margin-right: 12px; }
.details { height: 670px; }
.title { height: 74px; padding: 0 0 0 20px; font: 700 28.500px/74px "Noto Sans", sans-serif; }

.dock {
  flex: none; align-self: center; position: relative; width: 1598px; height: 94px; margin-top: 1px;
  border: 2px solid #69404a; border-radius: 28px; background: #40131d;
  display: flex; padding: 13px 0 0 12px; gap: 18px;
}
.app { position: relative; width: 58px; height: 58px; flex: none; }
.app > svg { width: 58px; height: 58px; }
.run::after { content: ""; position: absolute; left: 25px; top: 67px; width: 8px; height: 8px; border-radius: 50%; background: #c495a0; }
.badge { position: absolute; left: 39px; top: -7px; width: 26px; height: 26px; border-radius: 50%; background: #ec3a36; font: 400 17px/26px Inter, sans-serif; text-align: center; }
.dock hr { border: 0; margin: -3px 7px 0 7px; width: 2px; height: 70px; background: #76515b; flex: none; }
.jul { font: 600 12.500px Inter, sans-serif; fill: #fff; text-anchor: middle; }
.day { font: 300 34px Inter, sans-serif; letter-spacing: -1px; fill: #222; text-anchor: middle; }
.route { font: 700 8.500px Inter, sans-serif; fill: #fff; text-anchor: middle; }
.w { font: 700 9px "Liberation Sans", sans-serif; fill: #555; text-anchor: middle; }
```
FILE: grid.js
```js
// Ground grid of the 3D viewport: rows recede to the horizon, columns meet at one vanishing point.
(function () {
  var svg = document.getElementById('grid');
  var H = 581, VX = 988, L = 10, R = 1782, B = 1485, NEAR = 606;
  var out = '<rect x="10" y="581" width="1772" height="25" fill="#111"/>';
  function line(x1, y1, x2, y2, c) {
    out += '<line x1="' + x1.toFixed(1) + '" y1="' + y1.toFixed(1) + '" x2="' + x2.toFixed(1) + '" y2="' + y2.toFixed(1) + '" stroke="' + c + '"/>';
  }
  for (var n = -1; n < 20; n++) {
    line(L, H + 591 / (2.49 + n), R, H + 645.4 / (2.52 + n), n === 6 ? '#222' : '#131313');
  }
  for (var k = -16; k <= 16; k++) {
    var m = -0.067 + 2.33 * k;
    line(VX + m * (NEAR - H), NEAR, VX + m * (B - H), B, k === 0 ? '#1e1e1e' : '#131313');
  }
  svg.innerHTML = out;
})();
```
